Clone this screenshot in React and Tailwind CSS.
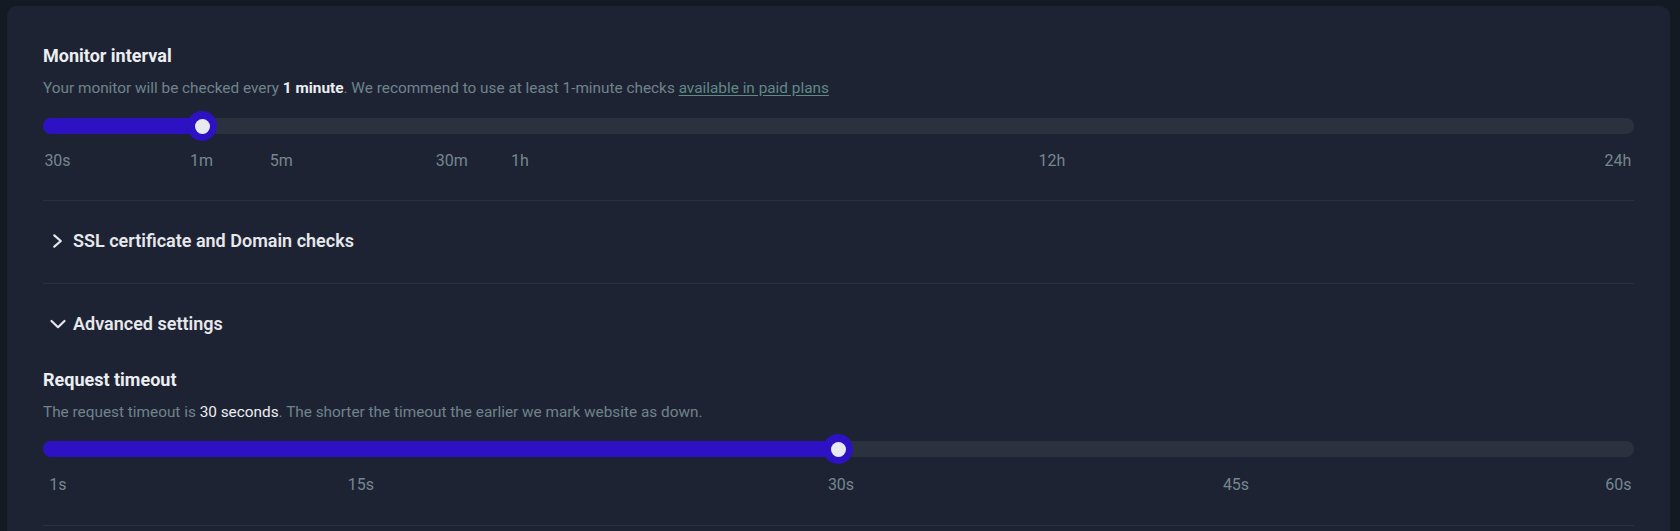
import React from "react";

const font = { fontFamily: "Roboto, 'Noto Sans', sans-serif" };

function Slider({ thumb, marks, top, gap }) {
  return (
    <div>
      <div className={"relative h-[30px] " + top}>
        <div className="absolute left-0 right-0 top-[7px] h-4 rounded-full bg-[#2c3140]" />
        <div
          className="absolute left-0 top-[7px] h-4 rounded-l-full bg-[#2c12c3]"
          style={{ width: thumb }}
        />
        <div
          className="absolute top-0 flex h-[30px] w-[30px] -translate-x-1/2 items-center justify-center rounded-full bg-[#2c12c3]"
          style={{ left: thumb }}
        >
          <div className="h-[15px] w-[15px] rounded-full bg-[#e8eaef]" />
        </div>
      </div>
      <div className={"relative h-6 text-[16px] leading-6 text-[#74878f] " + gap}>
        {marks.map(([label, x]) => (
          <span key={label} className="absolute top-0 -translate-x-1/2 whitespace-nowrap" style={{ left: x }}>
            {label}
          </span>
        ))}
      </div>
    </div>
  );
}

function Chevron({ down }) {
  return (
    <svg width="20" height="20" viewBox="0 0 20 20" fill="none" className="shrink-0">
      {down ? (
        <path d="M3.5 7 L10 13.2 L16.5 7" stroke="#e6e8ec" strokeWidth="2.2" strokeLinecap="round" strokeLinejoin="round" />
      ) : (
        <path d="M6.3 4.3 L12.8 10 L6.3 15.7" stroke="#e6e8ec" strokeWidth="2.2" strokeLinecap="round" strokeLinejoin="round" />
      )}
    </svg>
  );
}

export default function App() {
  return (
    <div className="min-h-[531px] bg-[#141a24] pl-[7px] pr-[10px] pt-[6px]" style={font}>
      <div className="min-h-[525px] rounded-t-[10px] bg-[#1e2333] px-9 pt-[38px]">
        <h2 className="text-[18px] font-bold leading-6 text-[#eceef2]">Monitor interval</h2>
        <p className="mt-[10px] text-[15.35px] leading-5 text-[#6f838b]">
          Your monitor will be checked every <span className="font-bold text-[#eceef2]">1 minute</span>. We recommend to use
          at least 1-minute checks{" "}
          <a className="text-[#5f8a85] underline underline-offset-2">available in paid plans</a>
        </p>
        <Slider
          top="mt-[13px]"
          gap="mt-2"
          thumb={159}
          marks={[
            ["30s", 14.5],
            ["1m", 158.5],
            ["5m", 238.3],
            ["30m", 408.7],
            ["1h", 477],
            ["12h", 1009],
            ["24h", 1575],
          ]}
        />
        <div className="mt-[27px] border-t border-[#2a3040]" />
        <div className="flex items-center gap-[5px] pb-[30px] pl-[5px] pt-[28px]">
          <Chevron />
          <span className="text-[18px] font-semibold leading-6 text-[#e6e8ec]">SSL certificate and Domain checks</span>
        </div>
        <div className="border-t border-[#2a3040]" />
        <div className="flex items-center gap-[5px] pl-[5px] pt-[28px]">
          <Chevron down />
          <span className="text-[18px] font-semibold leading-6 text-[#e6e8ec]">Advanced settings</span>
        </div>
        <h2 className="mt-[32px] text-[18px] font-bold leading-6 text-[#eceef2]">Request timeout</h2>
        <p className="mt-[10px] text-[15.35px] leading-5 text-[#6f838b]">
          The request timeout is <span className="text-[#eceef2]">30 seconds</span>. The shorter the timeout the earlier we
          mark website as down.
        </p>
        <Slider
          top="mt-[12px]"
          gap="mt-[9px]"
          thumb={795.3}
          marks={[
            ["1s", 14.8],
            ["15s", 317.8],
            ["30s", 798],
            ["45s", 1193],
            ["60s", 1575.3],
          ]}
        />
        <div className="mt-[28px] border-t border-[#2a3040]" />
      </div>
    </div>
  );
}
